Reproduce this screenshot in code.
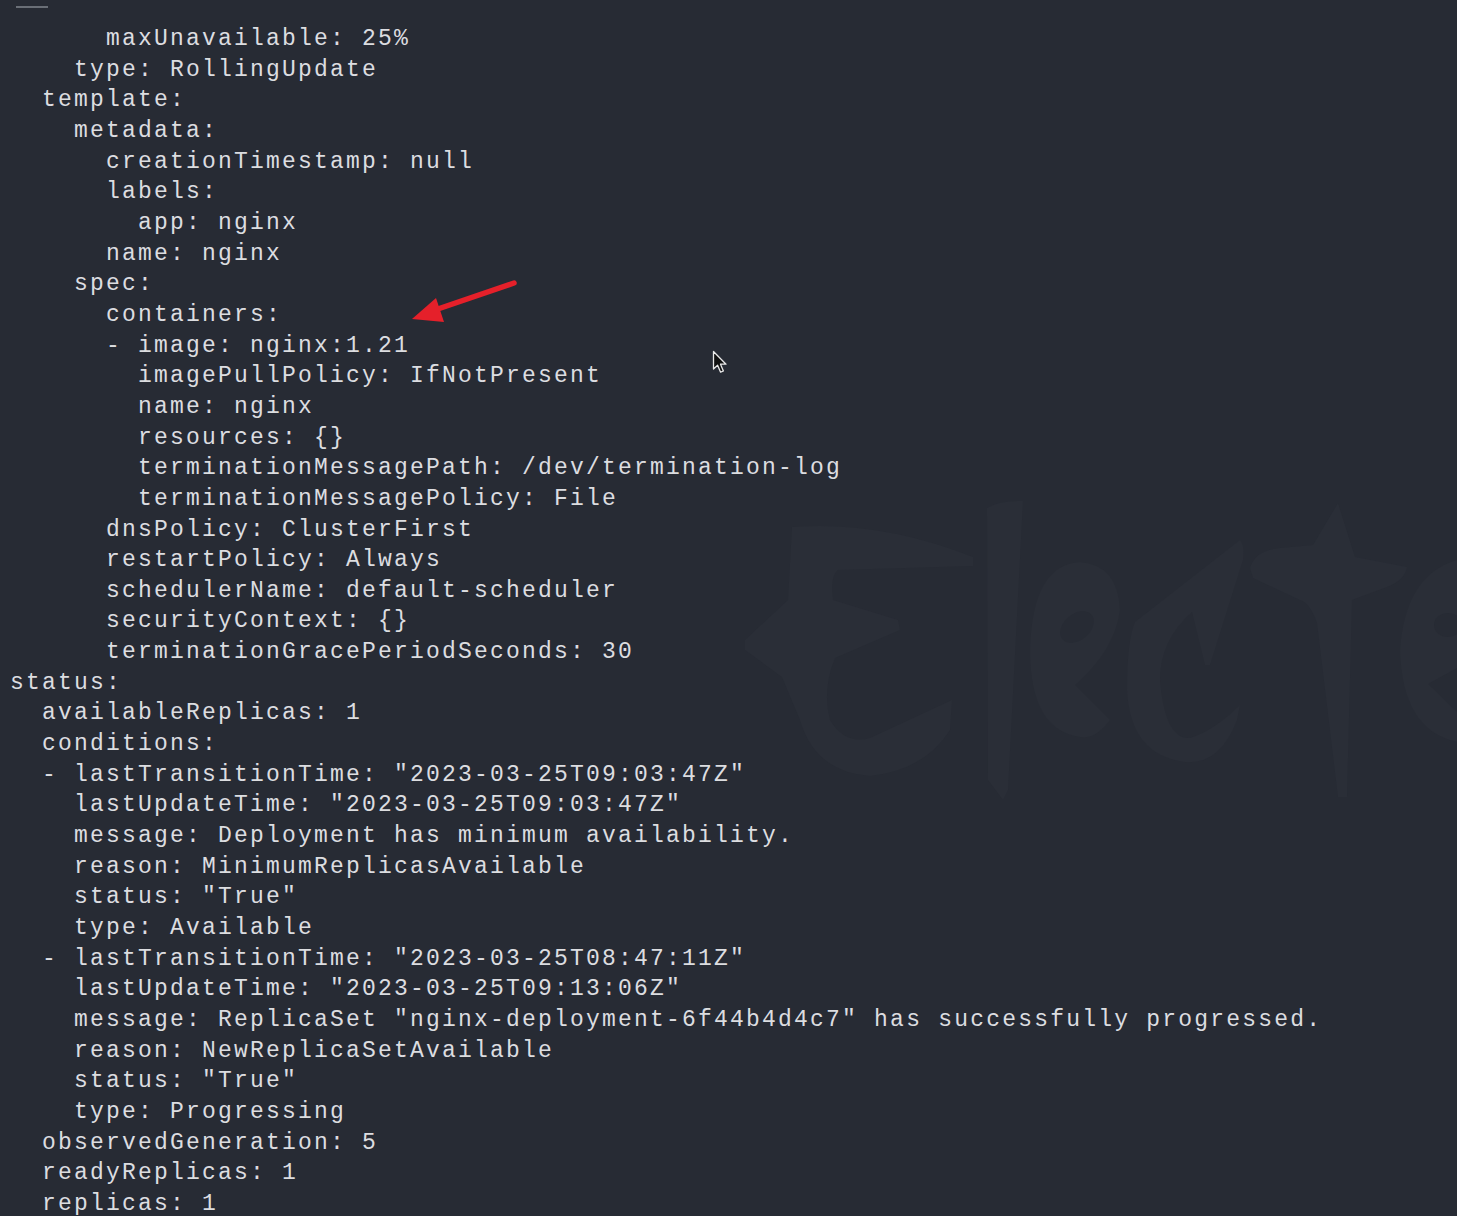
const yaml = `      maxUnavailable: 25%
    type: RollingUpdate
  template:
    metadata:
      creationTimestamp: null
      labels:
        app: nginx
      name: nginx
    spec:
      containers:
      - image: nginx:1.21
        imagePullPolicy: IfNotPresent
        name: nginx
        resources: {}
        terminationMessagePath: /dev/termination-log
        terminationMessagePolicy: File
      dnsPolicy: ClusterFirst
      restartPolicy: Always
      schedulerName: default-scheduler
      securityContext: {}
      terminationGracePeriodSeconds: 30
status:
  availableReplicas: 1
  conditions:
  - lastTransitionTime: "2023-03-25T09:03:47Z"
    lastUpdateTime: "2023-03-25T09:03:47Z"
    message: Deployment has minimum availability.
    reason: MinimumReplicasAvailable
    status: "True"
    type: Available
  - lastTransitionTime: "2023-03-25T08:47:11Z"
    lastUpdateTime: "2023-03-25T09:13:06Z"
    message: ReplicaSet "nginx-deployment-6f44b4d4c7" has successfully progressed.
    reason: NewReplicaSetAvailable
    status: "True"
    type: Progressing
  observedGeneration: 5
  readyReplicas: 1
  replicas: 1`;

// faint "Electron" brush watermark behind the terminal text
function Watermark() {
  return (
    <svg
      className="absolute left-0 top-0 pointer-events-none"
      width="1457"
      height="1216"
      viewBox="0 0 1457 1216"
    >
      <g fill="#2a2e37">
        <path d="M792 527 Q880 520 973 557 L973 566 L838 570 Q830 575 833 600 L898 620 L900 630 L835 658 Q822 690 830 720 Q845 745 870 738 L952 700 L950 730 Q925 770 870 776 Q815 772 800 720 L782 677 L745 650 L745 640 L788 600 Z" />
        <path d="M987 508 Q1000 500 1023 501 L1008 790 L1003 800 L988 780 Z" />
        <path d="M1080 562 Q1118 565 1120 610 Q1115 650 1075 685 L1110 720 Q1095 740 1080 737 Q1030 730 1030 650 Q1032 565 1080 562 Z" />
        <path d="M1240 540 Q1245 545 1243 560 L1210 665 L1205 665 L1192 612 Q1160 640 1160 680 Q1165 740 1190 738 Q1215 730 1240 705 L1237 720 Q1220 765 1185 762 Q1130 755 1127 690 Q1127 640 1135 622 Z" />
        <path d="M1250 568 Q1255 550 1280 548 L1313 545 L1338 503 L1355 557 L1407 567 Q1405 580 1387 587 L1352 600 L1347 797 L1338 797 L1317 623 Q1310 603 1300 600 L1253 578 Z" />
        <path d="M1457 560 Q1405 575 1400 650 Q1402 730 1457 742 L1457 712 L1428 684 L1457 668 Z" />
      </g>
      <g fill="#272b34">
        <ellipse cx="1077" cy="627" rx="19" ry="13" transform="rotate(-40 1077 627)" />
        <ellipse cx="1448" cy="625" rx="14" ry="12" />
      </g>
    </svg>
  );
}

function Arrow() {
  return (
    <svg className="absolute left-0 top-0 pointer-events-none" width="1457" height="1216">
      <line x1="514" y1="283" x2="432" y2="311" stroke="#e5202a" strokeWidth="5.5" strokeLinecap="round" />
      <polygon points="412,319 436,298 444,322" fill="#e5202a" />
    </svg>
  );
}

function Pointer() {
  return (
    <svg className="absolute left-[712px] top-[350px]" width="18" height="26" viewBox="0 0 18 26">
      <path
        d="M1.5 1.5 L1.5 19 L5.6 15.2 L8.6 22.2 L11.4 21 L8.5 14.2 L14 14.2 Z"
        fill="#111"
        stroke="#e8e8e8"
        strokeWidth="1.3"
        strokeLinejoin="round"
      />
    </svg>
  );
}

export default function App() {
  return (
    <div className="relative h-[1216px] w-full overflow-hidden bg-[#272b34]">
      <Watermark />
      <div className="relative pt-[6px]">
        <div className="ml-[16px] h-[2px] w-[32px] bg-[#6a6f77]" />
        <pre
          className="mt-[16px] pl-[10px] text-[23px] leading-[30.66px] tracking-[2.2px] text-[#dcdde0] whitespace-pre"
          style={{ fontFamily: '"Liberation Mono", "DejaVu Sans Mono", monospace' }}
        >
          {yaml}
        </pre>
      </div>
      <Arrow />
      <Pointer />
    </div>
  );
}
